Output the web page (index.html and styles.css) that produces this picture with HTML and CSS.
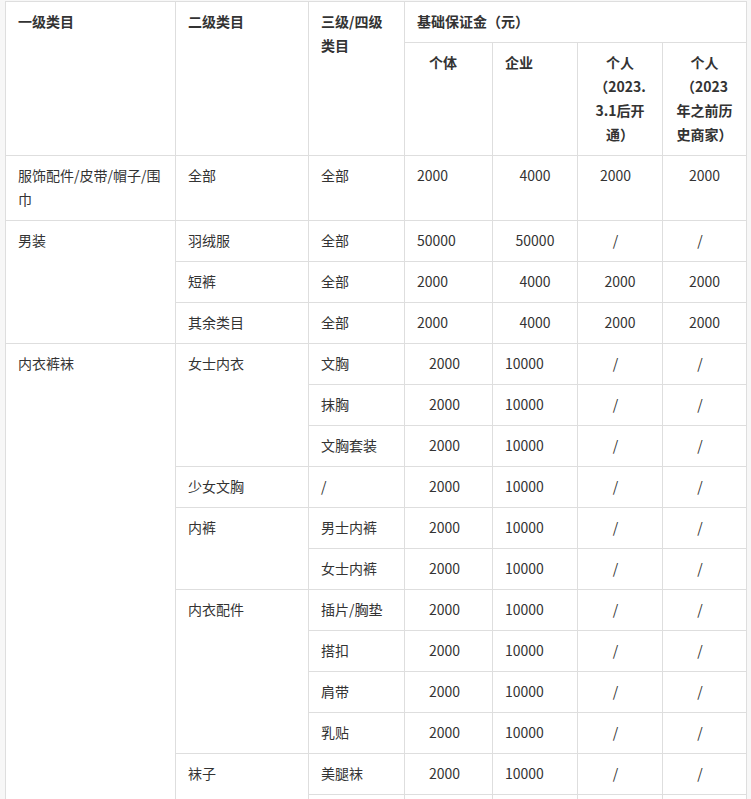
FILE: index.html
```html
<!DOCTYPE html>
<html lang="zh-CN">
<head>
<meta charset="utf-8">
<title>基础保证金</title>
<link rel="stylesheet" href="styles.css">
</head>
<body>
<div class="sheet" role="table">
  <div class="cell th r2">一级类目</div>
  <div class="cell th r2">二级类目</div>
  <div class="cell th r2">三级/四级类目</div>
  <div class="cell th c4">基础保证金（元）</div>
  <div class="cell th ind">个体</div>
  <div class="cell th">企业</div>
  <div class="cell th c">个人<br>（2023.<br>3.1后开<br>通）</div>
  <div class="cell th c">个人<br>（2023<br>年之前历<br>史商家）</div>

  <div class="cell">服饰配件/皮带/帽子/围巾</div>
  <div class="cell">全部</div>
  <div class="cell">全部</div>
  <div class="cell">2000</div>
  <div class="cell c">4000</div>
  <div class="cell cs">2000</div>
  <div class="cell c">2000</div>

  <div class="cell r3">男装</div>
  <div class="cell">羽绒服</div>
  <div class="cell">全部</div>
  <div class="cell">50000</div>
  <div class="cell c">50000</div>
  <div class="cell cs">/</div>
  <div class="cell cs">/</div>

  <div class="cell">短裤</div>
  <div class="cell">全部</div>
  <div class="cell">2000</div>
  <div class="cell c">4000</div>
  <div class="cell c">2000</div>
  <div class="cell c">2000</div>

  <div class="cell">其余类目</div>
  <div class="cell">全部</div>
  <div class="cell">2000</div>
  <div class="cell c">4000</div>
  <div class="cell c">2000</div>
  <div class="cell c">2000</div>

  <div class="cell r12">内衣裤袜</div>
  <div class="cell r3">女士内衣</div>
  <div class="cell">文胸</div>
  <div class="cell ind">2000</div>
  <div class="cell">10000</div>
  <div class="cell cs">/</div>
  <div class="cell cs">/</div>

  <div class="cell">抹胸</div>
  <div class="cell ind">2000</div>
  <div class="cell">10000</div>
  <div class="cell cs">/</div>
  <div class="cell cs">/</div>

  <div class="cell">文胸套装</div>
  <div class="cell ind">2000</div>
  <div class="cell">10000</div>
  <div class="cell cs">/</div>
  <div class="cell cs">/</div>

  <div class="cell">少女文胸</div>
  <div class="cell">/</div>
  <div class="cell ind">2000</div>
  <div class="cell">10000</div>
  <div class="cell cs">/</div>
  <div class="cell cs">/</div>

  <div class="cell r2">内裤</div>
  <div class="cell">男士内裤</div>
  <div class="cell ind">2000</div>
  <div class="cell">10000</div>
  <div class="cell cs">/</div>
  <div class="cell cs">/</div>

  <div class="cell">女士内裤</div>
  <div class="cell ind">2000</div>
  <div class="cell">10000</div>
  <div class="cell cs">/</div>
  <div class="cell cs">/</div>

  <div class="cell r4">内衣配件</div>
  <div class="cell">插片/胸垫</div>
  <div class="cell ind">2000</div>
  <div class="cell">10000</div>
  <div class="cell cs">/</div>
  <div class="cell cs">/</div>

  <div class="cell">搭扣</div>
  <div class="cell ind">2000</div>
  <div class="cell">10000</div>
  <div class="cell cs">/</div>
  <div class="cell cs">/</div>

  <div class="cell">肩带</div>
  <div class="cell ind">2000</div>
  <div class="cell">10000</div>
  <div class="cell cs">/</div>
  <div class="cell cs">/</div>

  <div class="cell">乳贴</div>
  <div class="cell ind">2000</div>
  <div class="cell">10000</div>
  <div class="cell cs">/</div>
  <div class="cell cs">/</div>

  <div class="cell r2">袜子</div>
  <div class="cell">美腿袜</div>
  <div class="cell ind">2000</div>
  <div class="cell">10000</div>
  <div class="cell cs">/</div>
  <div class="cell cs">/</div>

  <div class="cell empty"></div>
  <div class="cell empty"></div>
  <div class="cell empty"></div>
  <div class="cell empty"></div>
  <div class="cell empty"></div>
</div>
</body>
</html>
```

FILE: styles.css
```css
html, body {
  margin: 0;
  background: #f7f7f7;
}

body {
  padding: 1px 4px 0 5px;
  font-family: "Noto Sans CJK SC", "Noto Sans", sans-serif;
  font-size: 14px;
  line-height: 24px;
  color: #333;
}

.sheet {
  display: grid;
  grid-template-columns: 169px 132px 95px 87px 84px 84px 83px;
  gap: 1px;
  width: max-content;
  background: #dedede;
  border: 1px solid #dedede;
}

.cell {
  background: #fff;
  padding: 7px 12px 9px;
  text-align: left;
}

.empty {
  min-height: 24px;
}

.th {
  font-weight: 700;
}

.r2 { grid-row: span 2; }
.r3 { grid-row: span 3; }
.r4 { grid-row: span 4; }
.r12 { grid-row: span 12; }
.c4 { grid-column: span 4; }

.c { text-align: center; }
.cs { text-align: center; padding-right: 21px; }
.ind { padding-left: 24px; }
```
